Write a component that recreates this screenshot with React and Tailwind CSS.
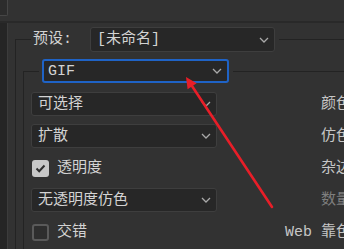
import React from 'react';

function Chevron() {
  return (
    <svg width="10" height="6" viewBox="0 0 10 6" className="mr-[5px] shrink-0">
      <path d="M1 1 L5 5 L9 1" fill="none" stroke="#a9a9a9" strokeWidth="1.3" />
    </svg>
  );
}

function Select({ label, className = '' }) {
  return (
    <div
      className={`flex items-center justify-between bg-[#272727] border border-[#3e3e3e] rounded-[3px] pl-[6px] ${className}`}
    >
      <span className="whitespace-nowrap">{label}</span>
      <Chevron />
    </div>
  );
}

function Check({ checked, label }) {
  return (
    <div className="h-6 flex items-center gap-[8px] pl-[1px]">
      {checked ? (
        <div className="w-[17px] h-[17px] rounded-[3px] bg-[#c8c8c8] flex items-center justify-center">
          <svg width="11" height="9" viewBox="0 0 11 9">
            <path d="M1.5 4.5 L4.2 7.2 L9.5 1.5" fill="none" stroke="#2e2e2e" strokeWidth="2" />
          </svg>
        </div>
      ) : (
        <div className="w-[17px] h-[17px] rounded-[3px] border-2 border-[#5a5a5a] bg-[#2e2e2e]" />
      )}
      <span>{label}</span>
    </div>
  );
}

function RightLabel({ children, dim }) {
  return (
    <div className={`h-6 flex items-center justify-end whitespace-nowrap ${dim ? 'text-[#7e7e7e]' : 'text-[#c6c6c6]'}`}>
      {children}
    </div>
  );
}

export default function App() {
  return (
    <div className="relative w-[344px] h-[249px] overflow-hidden bg-[#323232] text-[15px] leading-none text-[#d3d3d3] font-['Liberation_Mono','Noto_Sans_CJK_SC',monospace] flex flex-col">
      {/* top strip */}
      <div className="h-[21px] flex shrink-0">
        <div className="w-[8px] h-[16px] bg-[#2c2c2c] border-r border-b border-[#464646] rounded-br-[2px]" />
      </div>
      <div className="h-[2px] bg-[#292929] shrink-0" />

      <div className="flex flex-1 min-h-0">
        <div className="w-[8px] bg-[#252525] border-r border-[#3c3c3c] shrink-0" />
        <div className="flex-1 pl-[7px] pt-[16px] flex flex-col">
          {/* outer group */}
          <div className="flex-1 border-l border-t border-[#232323] flex flex-col">
            <div className="-mt-[13px] h-[25px] flex">
              <div className="ml-[15px] flex items-center bg-[#323232] pl-[2px] pr-[4px]">
                <span className="w-[57px] whitespace-nowrap">预设:</span>
                <Select label="[未命名]" className="w-[185px] h-[25px]" />
              </div>
            </div>

            {/* inner group */}
            <div className="ml-[7px] mt-[19px] flex-1 border-l border-t border-[#232323] flex flex-col">
              <div className="-mt-[13px] h-[24px] flex">
                <div className="ml-[15px] flex items-center bg-[#323232] pl-[3px] pr-[4px]">
                  <div className="w-[187px] h-[24px] flex items-center justify-between bg-[#272727] border-2 border-[#1f63c6] rounded-[3px] pl-[4px]">
                    <span>GIF</span>
                    <Chevron />
                  </div>
                </div>
              </div>

              <div className="ml-[7px] mt-[9px] w-[329px] grid grid-cols-[186px_1fr] gap-y-2">
                <Select label="可选择" className="h-6" />
                <RightLabel>颜色:</RightLabel>

                <Select label="扩散" className="h-6" />
                <RightLabel>仿色:</RightLabel>

                <Check checked label="透明度" />
                <RightLabel>杂边:</RightLabel>

                <Select label="无透明度仿色" className="h-6" />
                <RightLabel dim>数量:</RightLabel>

                <Check label="交错" />
                <RightLabel>Web 靠色:</RightLabel>
              </div>
            </div>
          </div>
        </div>
      </div>

      {/* red annotation arrow */}
      <svg className="absolute inset-0 pointer-events-none" width="344" height="249" viewBox="0 0 344 249">
        <line x1="272" y1="207" x2="190" y2="83" stroke="#e81e28" strokeWidth="2.6" strokeLinecap="round" />
        <polygon points="186,77 187.6,89.2 196.6,83.2" fill="#e81e28" />
      </svg>
    </div>
  );
}
